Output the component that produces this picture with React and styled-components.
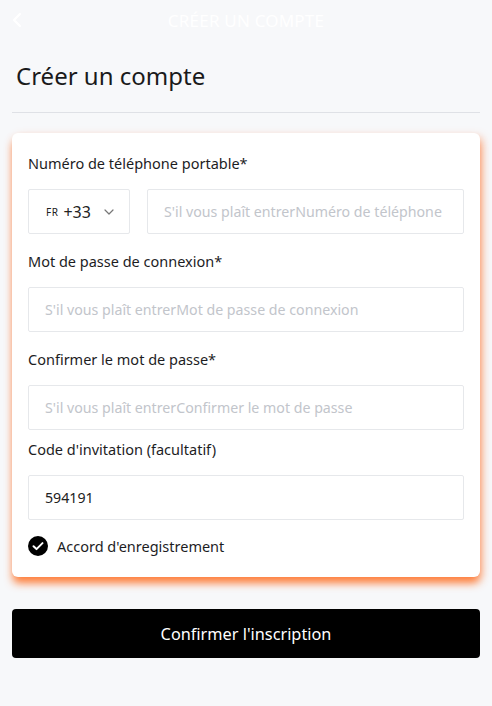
import React, { useState } from 'react';
import styled, { createGlobalStyle } from 'styled-components';

const GlobalStyle = createGlobalStyle`
  body {
    margin: 0;
    background: #f7f8fa;
    font-family: "Noto Sans", "Open Sans", sans-serif;
    color: #1d1d1f;
  }
`;

const Page = styled.div`
  width: 492px;
  min-height: 706px;
  background: #f7f8fa;
`;

const Header = styled.header`
  height: 40px;
  display: grid;
  grid-template-columns: 40px 1fr 40px;
  align-items: center;
`;

const BackButton = styled.button`
  background: none;
  border: none;
  padding: 0 0 0 12px;
  display: flex;
  align-items: center;
  cursor: pointer;
`;

const HeaderTitle = styled.div`
  text-align: center;
  color: #ffffff;
  font-size: 17px;
  letter-spacing: 0.2px;
`;

const TitleBlock = styled.div`
  margin: 0 12px;
  padding: 20px 4px 20px;
  border-bottom: 1px solid #dfe1e6;
`;

const Heading = styled.h1`
  margin: 0;
  font-size: 24px;
  font-weight: 400;
  line-height: 32px;
  color: #1a1a1a;
`;

const Card = styled.form`
  margin: 20px 12px 0;
  padding: 19px 16px 20px;
  background: #fff;
  border-radius: 6px;
  box-shadow: 0 7px 9px -1px rgba(255, 105, 25, 0.8), 3px 3px 9px rgba(255, 130, 70, 0.35);
`;

const Label = styled.div`
  font-size: 14.5px;
  line-height: 22px;
  color: #1d1d1f;
  margin-bottom: 15px;
`;

const Row = styled.div`
  display: flex;
  gap: 17px;
  margin-bottom: ${p => p.$mb ?? 16}px;
`;

const Box = styled.div`
  height: 45px;
  box-sizing: border-box;
  border: 1px solid #e6e8eb;
  border-radius: 2px;
  display: flex;
  align-items: center;
`;

const CodeBox = styled(Box)`
  width: 102px;
  flex-shrink: 0;
  padding-left: 17px;
  gap: 5px;
`;

const Country = styled.span`
  font-size: 10px;
  letter-spacing: 0.5px;
  color: #222;
`;

const Dial = styled.span`
  font-size: 16px;
  color: #222;
  margin-right: 8px;
`;

const Input = styled.input`
  flex: 1;
  min-width: 0;
  height: 45px;
  box-sizing: border-box;
  border: 1px solid #e6e8eb;
  border-radius: 2px;
  padding: 0 16px;
  font-family: inherit;
  font-size: 14.2px;
  color: #222;
  outline: none;
  &::placeholder {
    color: #c2c5cb;
  }
`;

const AgreeRow = styled.label`
  display: flex;
  align-items: center;
  gap: 9px;
  font-size: 14.5px;
  line-height: 22px;
  color: #1d1d1f;
  cursor: pointer;
`;

const SubmitButton = styled.button`
  display: block;
  width: calc(100% - 24px);
  margin: 32px 12px 0;
  height: 49px;
  border: none;
  border-radius: 4px;
  background: #000;
  color: #fff;
  font-family: inherit;
  font-size: 16.3px;
  cursor: pointer;
`;

const Chevron = ({ size = 10, color = '#777' }) => (
  <svg width={size} height={size * 0.6} viewBox="0 0 10 6" fill="none">
    <path d="M1 1l4 4 4-4" stroke={color} strokeWidth="1.2" strokeLinecap="round" strokeLinejoin="round" />
  </svg>
);

const BackIcon = () => (
  <svg width="10" height="16" viewBox="0 0 10 16" fill="none">
    <path d="M8 2L2 8l6 6" stroke="#fff" strokeWidth="2.2" strokeLinecap="round" strokeLinejoin="round" />
  </svg>
);

const CheckCircle = () => (
  <svg width="20" height="20" viewBox="0 0 20 20">
    <circle cx="10" cy="10" r="10" fill="#000" />
    <path d="M5.5 10.3l3 2.8 6-6" stroke="#fff" strokeWidth="2" fill="none" strokeLinecap="round" strokeLinejoin="round" />
  </svg>
);

export default function App() {
  const [form, setForm] = useState({ phone: '', password: '', confirm: '', invite: '594191' });
  const handleChange = (e) => setForm({ ...form, [e.target.name]: e.target.value });

  return (
    <Page>
      <GlobalStyle />
      <Header>
        <BackButton aria-label="Retour"><BackIcon /></BackButton>
        <HeaderTitle>CRÉER UN COMPTE</HeaderTitle>
        <span />
      </Header>
      <TitleBlock>
        <Heading>Créer un compte</Heading>
      </TitleBlock>
      <Card onSubmit={(e) => e.preventDefault()}>
        <Label>Numéro de téléphone portable*</Label>
        <Row>
          <CodeBox>
            <Country>FR</Country>
            <Dial>+33</Dial>
            <Chevron />
          </CodeBox>
          <Input name="phone" value={form.phone} onChange={handleChange} placeholder="S'il vous plaît entrerNuméro de téléphone" />
        </Row>
        <Label>Mot de passe de connexion*</Label>
        <Row>
          <Input type="password" name="password" value={form.password} onChange={handleChange} placeholder="S'il vous plaît entrerMot de passe de connexion" />
        </Row>
        <Label>Confirmer le mot de passe*</Label>
        <Row $mb={8}>
          <Input type="password" name="confirm" value={form.confirm} onChange={handleChange} placeholder="S'il vous plaît entrerConfirmer le mot de passe" />
        </Row>
        <Label>Code d'invitation (facultatif)</Label>
        <Row $mb={15}>
          <Input name="invite" value={form.invite} onChange={handleChange} />
        </Row>
        <AgreeRow>
          <CheckCircle />
          Accord d'enregistrement
        </AgreeRow>
      </Card>
      <SubmitButton type="button">Confirmer l'inscription</SubmitButton>
    </Page>
  );
}
